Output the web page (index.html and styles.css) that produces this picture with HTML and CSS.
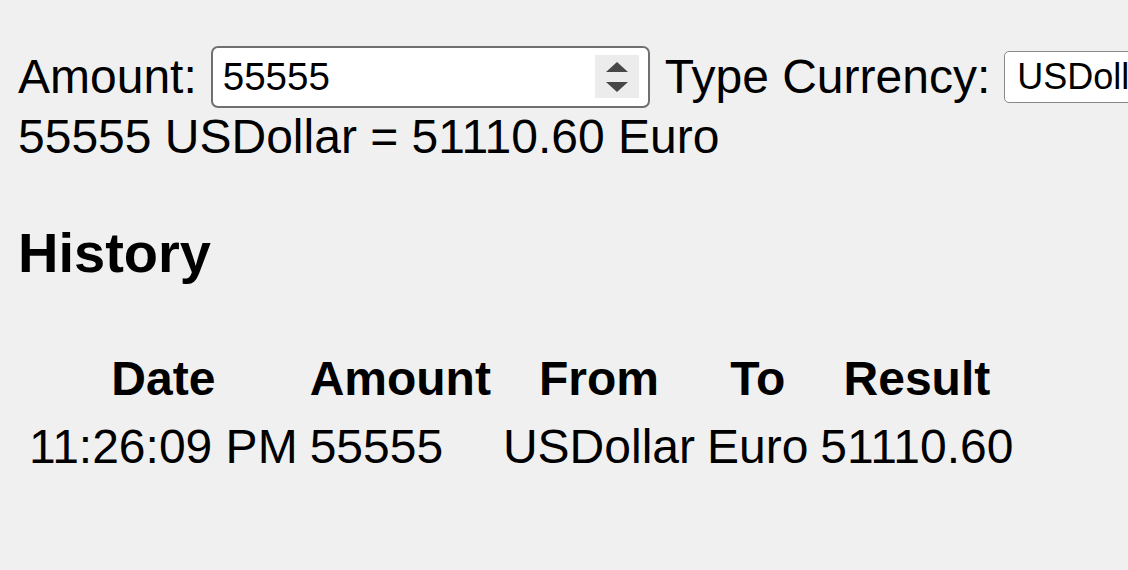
FILE: index.html
```html
<!DOCTYPE html>
<html lang="en">
<head>
<meta charset="utf-8">
<title>Currency Converter</title>
<link rel="stylesheet" href="styles.css">
</head>
<body>
<div class="converter">
  <label class="label" for="amount">Amount:</label>
  <span class="number-field">
    <input id="amount" class="number-input" type="text" value="55555">
    <span class="spinner" aria-hidden="true">
      <svg width="22" height="30" viewBox="0 0 22 30"><path d="M11 0 L22 10 L0 10 Z" fill="#474747"/><path d="M0 20 L22 20 L11 30 Z" fill="#474747"/></svg>
    </span>
  </span>
  <label class="label" for="currency">Type Currency:</label>
  <select id="currency" class="currency">
    <option>USDollar</option>
    <option>Euro</option>
  </select>
</div>
<div class="result">55555 USDollar = 51110.60 Euro</div>
<h3 class="history-title">History</h3>
<table class="history">
  <thead>
    <tr><th>Date</th><th>Amount</th><th>From</th><th>To</th><th>Result</th></tr>
  </thead>
  <tbody>
    <tr><td>11:26:09 PM</td><td>55555</td><td>USDollar</td><td>Euro</td><td>51110.60</td></tr>
  </tbody>
</table>
</body>
</html>
```
FILE: styles.css
```css
html {
  overflow: hidden;
  background: #f0f0f0;
}
body {
  margin: 0;
  padding: 44px 0 0 18px;
  font-family: "Liberation Sans", Arial, sans-serif;
  font-size: 48px;
  line-height: 55px;
  color: #000;
  background: #f0f0f0;
}
.converter {
  display: flex;
  align-items: center;
  height: 65px;
  white-space: nowrap;
}
.label {
  flex-shrink: 0;
}
.number-field {
  flex-shrink: 0;
  display: flex;
  align-items: center;
  box-sizing: border-box;
  width: 439px;
  height: 62px;
  margin: 0 15px 0 14px;
  background: #fff;
  border: 2px solid #707070;
  border-radius: 7px;
}
.number-input {
  flex: 1;
  min-width: 0;
  border: none;
  outline: none;
  background: transparent;
  padding: 0 0 0 10px;
  font-family: "Liberation Sans", Arial, sans-serif;
  font-size: 38.5px;
  color: #000;
}
.spinner {
  flex-shrink: 0;
  display: flex;
  align-items: center;
  justify-content: center;
  width: 44px;
  height: 43px;
  margin-right: 9px;
  background: #ececec;
}
.spinner svg {
  display: block;
}
.currency {
  flex-shrink: 0;
  appearance: none;
  -webkit-appearance: none;
  box-sizing: border-box;
  width: 260px;
  height: 52px;
  margin-left: 14px;
  padding: 0 0 0 12px;
  background: #fff;
  border: 1.5px solid #8a8a8a;
  border-radius: 5px;
  font-family: "Liberation Sans", Arial, sans-serif;
  font-size: 36px;
  color: #000;
}
.history-title {
  margin: 57px 0 57px;
  font-size: 56px;
  line-height: 63px;
  font-weight: bold;
}
.history {
  margin-left: 2px;
  border-spacing: 6px 7px;
  font-size: 48px;
}
.history th,
.history td {
  padding: 3px;
}
.history th {
  text-align: center;
  font-weight: bold;
}
.history td {
  text-align: left;
}
```
